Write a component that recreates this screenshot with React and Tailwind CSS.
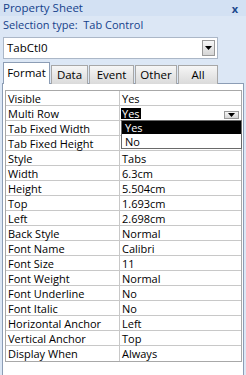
import React from "react";

const rows = [
  ["Visible", "Yes"],
  ["Multi Row", "Yes"],
  ["Tab Fixed Width", ""],
  ["Tab Fixed Height", ""],
  ["Style", "Tabs"],
  ["Width", "6.3cm"],
  ["Height", "5.504cm"],
  ["Top", "1.693cm"],
  ["Left", "2.698cm"],
  ["Back Style", "Normal"],
  ["Font Name", "Calibri"],
  ["Font Size", "11"],
  ["Font Weight", "Normal"],
  ["Font Underline", "No"],
  ["Font Italic", "No"],
  ["Horizontal Anchor", "Left"],
  ["Vertical Anchor", "Top"],
  ["Display When", "Always"],
];

const tabs = [
  ["Data", "w-[37px]"],
  ["Event", "w-[45px]"],
  ["Other", "w-[42px]"],
  ["All", "w-[40px]"],
];

const ArrowButton = ({ className }) => (
  <div
    className={`flex items-center justify-center border border-[#9a9a9a] bg-gradient-to-b from-[#f7f7f7] to-[#d6d6d6] ${className}`}
  >
    <svg width="7" height="4" viewBox="0 0 7 4">
      <polygon points="0,0 7,0 3.5,4" fill="#000" />
    </svg>
  </div>
);

const App = () => {
  return (
    <div className="w-[246px] h-[375px] overflow-hidden bg-[#dce7f5] font-['Open_Sans',sans-serif] text-[11px] text-black leading-none">
      {/* Title */}
      <div className="h-[16px] flex items-center justify-between pl-[3px] pr-[8px] bg-[#d3e1f3] text-[#15428b]">
        <span className="text-[11.5px]">Property Sheet</span>
        <span className="font-bold text-[11px] text-[#1d4a8e]">x</span>
      </div>
      <div className="h-[16px] flex items-center pl-[3px] text-[#15428b]">
        Selection type:&nbsp; Tab Control
      </div>

      {/* Combobox */}
      <div className="mt-[5px] ml-[3px] w-[215px] h-[22px] bg-white border border-[#abb7c7] flex items-center justify-between pl-[3px] pr-[2px]">
        <span className="text-[11.5px]">TabCtl0</span>
        <ArrowButton className="w-[13px] h-[16px]" />
      </div>

      {/* Tabs */}
      <div className="mt-[3px] ml-[3px] h-[22px] flex items-end gap-[1px] relative z-10">
        <div className="w-[47px] h-[22px] bg-white border border-b-0 border-[#8c9db5] flex items-center justify-center text-[11.5px] pb-[1px]">
          Format
        </div>
        {tabs.map(([t, w]) => (
          <div
            key={t}
            className={`${w} h-[19px] border border-b-0 border-[#a7a7a7] bg-gradient-to-b from-[#f6f6f6] to-[#dadada] flex items-center justify-center text-[11.5px]`}
          >
            {t}
          </div>
        ))}
      </div>

      {/* Panel */}
      <div className="ml-[2px] -mt-[1px] w-[242px] h-[300px] bg-white border border-[#8c9db5] pt-[6px] pl-[2px] relative">
        <div className="w-[237px] border border-[#a8a8a8]">
          {rows.map(([k, v], i) => (
            <div
              key={k}
              className={`h-[15px] flex ${i < rows.length - 1 ? "border-b border-[#c8c8c8]" : ""}`}
            >
              <div className="w-[114px] border-r border-[#c8c8c8] flex items-center pl-[2px]">
                {k}
              </div>
              <div className="flex-1 flex items-center pl-[2px] pr-[2px] justify-between">
                {i === 1 ? (
                  <>
                    <span className="bg-black text-white px-[1px] -ml-[1px]">{v}</span>
                    <ArrowButton className="w-[15px] h-[8px] mt-[3px]" />
                  </>
                ) : (
                  <span>{v}</span>
                )}
              </div>
            </div>
          ))}
        </div>

        {/* Dropdown list */}
        <div className="absolute left-[118px] top-[36px] w-[121px] h-[29px] bg-white border border-[#6a6a6a] flex flex-col">
          <div className="h-[13px] bg-black text-white flex items-center pl-[3px]">Yes</div>
          <div className="h-[14px] flex items-center pl-[3px]">No</div>
        </div>
      </div>
    </div>
  );
};

export default App;
